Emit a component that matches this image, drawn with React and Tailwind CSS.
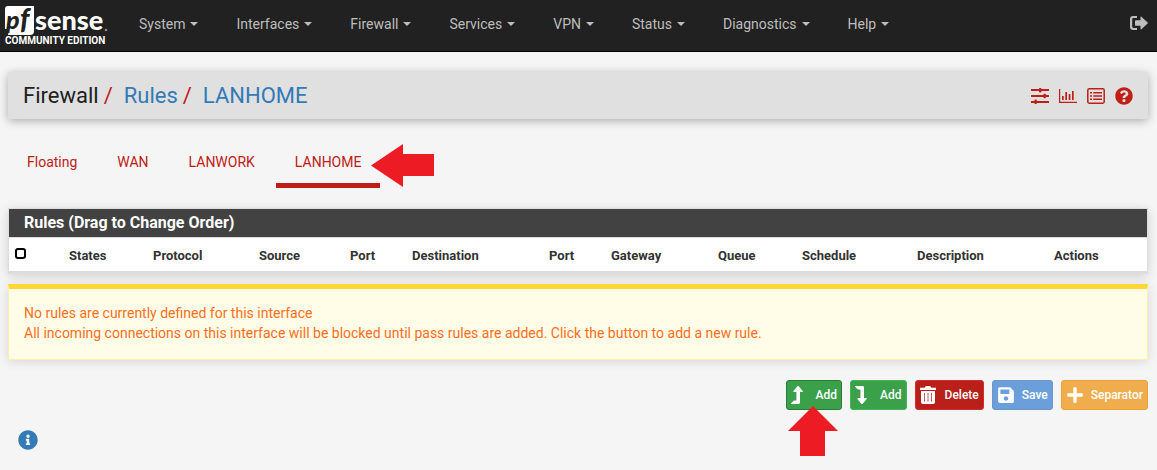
import React from "react";
import { FaQuestionCircle, FaInfoCircle, FaSave, FaPlus } from "react-icons/fa";

const menus = ["System", "Interfaces", "Firewall", "Services", "VPN", "Status", "Diagnostics", "Help"];
const tabs = ["Floating", "WAN", "LANWORK"];

const columns = [
  ["States", "w-[84px]"],
  ["Protocol", "w-[106px]"],
  ["Source", "w-[91px]"],
  ["Port", "w-[62px]"],
  ["Destination", "w-[137px]"],
  ["Port", "w-[62px]"],
  ["Gateway", "w-[107px]"],
  ["Queue", "w-[84px]"],
  ["Schedule", "w-[115px]"],
  ["Description", "w-[137px]"],
  ["Actions", "w-[101px]"],
];

function Logo() {
  return (
    <a href="#" aria-label="pfSense Community Edition" className="block w-[108px] shrink-0">
      <svg viewBox="0 0 112 51" className="block h-[51px] w-[112px]">
        <path d="M8 6H34V31Q34 35 30 35H8L9 29H5V9Q5 6 8 6Z" fill="#fff" />
        <text x="6" y="29" fontFamily="Lato, sans-serif" fontWeight="900" fontStyle="italic" fontSize="25" fill="#212121">p</text>
        <text x="20" y="29" fontFamily="Lato, sans-serif" fontWeight="900" fontStyle="italic" fontSize="28" fill="#212121">f</text>
        <text x="35" y="30" fontFamily="Lato, sans-serif" fontWeight="900" fontSize="27" fill="#fff">sense</text>
        <circle cx="106" cy="30" r="1.3" fill="#8a8a8a" />
        <text x="5" y="44" fontFamily="Roboto, sans-serif" fontWeight="700" fontSize="10" fill="#fff">COMMUNITY EDITION</text>
      </svg>
    </a>
  );
}

function SignOutIcon() {
  return (
    <svg viewBox="0 0 18 14" className="h-[14px] w-[18px]" fill="#bdbdbd">
      <path d="M7 0H3Q0 0 0 3V11Q0 14 3 14H7V12H3.6Q2.2 12 2.2 10.6V3.4Q2.2 2 3.6 2H7Z" />
      <path d="M6 4.2H10.5V1.2Q10.5 .2 11.4 .8L17.6 6.4Q18.2 7 17.6 7.6L11.4 13.2Q10.5 13.8 10.5 12.8V9.8H6Q5 9.8 5 9.2V4.8Q5 4.2 6 4.2Z" />
    </svg>
  );
}

function SlidersIcon() {
  return (
    <svg viewBox="0 0 18 16" className="h-4 w-[18px]" fill="#bf2016">
      <path d="M0 1H18V3H0ZM0 7H18V9H0ZM0 13H18V15H0Z" />
      <rect x="8" y="0" width="2.4" height="4.5" rx="0.8" />
      <rect x="12.5" y="5.8" width="2.4" height="4.4" rx="0.8" />
      <rect x="3.5" y="11.6" width="2.4" height="4.4" rx="0.8" />
    </svg>
  );
}

function ChartIcon() {
  return (
    <svg viewBox="0 0 18 16" className="h-4 w-[18px]" fill="#bf2016">
      <path d="M0 1H1.2V13.8H18V15H0ZM3 8H4.7V12H3ZM6.3 4H8V12H6.3ZM9.7 6H11.4V12H9.7ZM13 3H14.7V12H13Z" />
    </svg>
  );
}

function ListIcon() {
  return (
    <svg viewBox="0 0 18 16" className="h-4 w-[18px]" fill="#bf2016">
      <rect x="0.8" y="0.8" width="16.4" height="14.4" rx="1.4" fill="none" stroke="#bf2016" strokeWidth="1.5" />
      <path d="M3 4H5V5.6H3ZM3 7.2H5V8.8H3ZM3 10.4H5V12H3ZM6.2 4H15V5.4H6.2ZM6.2 7.3H15V8.7H6.2ZM6.2 10.6H15V12H6.2Z" />
    </svg>
  );
}

function LevelIcon({ down }) {
  return (
    <svg viewBox="0 0 12 18" className="h-[18px] w-3" fill="#fff">
      {down ? (
        <path d="M0 0H7.6Q9 0 9 1.4V12H11.4Q12.4 12.2 11.7 13.1L7.7 17.7Q7 18.3 6.3 17.7L2.5 13.1Q2 12.2 3 12H5.4V3.4H3Q2.6 3.4 2.4 3.1L0 .7Z" />
      ) : (
        <path d="M0 18H7.6Q9 18 9 16.6V6H11.4Q12.4 5.8 11.7 4.9L7.7 .3Q7 -.3 6.3 .3L2.5 4.9Q2 5.8 3 6H5.4V14.6H3Q2.6 14.6 2.4 14.9L0 17.3Z" />
      )}
    </svg>
  );
}

function TrashIcon() {
  return (
    <svg viewBox="0 0 16 18" className="h-[18px] w-4">
      <path d="M0 1.8H4.6L5.4 .5Q5.8 0 6.4 0H9.6Q10.2 0 10.6 .5L11.4 1.8H16V4H0Z" fill="#fff" />
      <path d="M1 5H15V16Q15 18 13 18H3Q1 18 1 16Z" fill="#fff" />
      <path d="M4.5 7V15.6M8 7V15.6M11.5 7V15.6" stroke="#cf5a68" strokeWidth="1" />
    </svg>
  );
}

function ActionButton({ icon, className, children }) {
  return (
    <button type="button" className={"flex h-[30px] items-center rounded-[3px] border px-1 text-xs font-medium text-white " + className}>
      <span className="flex w-[25px] items-center justify-start">{icon}</span>
      <span>{children}</span>
    </button>
  );
}

export default function App() {
  return (
    <div className="min-h-screen bg-[#f5f5f5] pb-5 font-['Roboto',sans-serif] text-sm text-[#212121]">
      <nav className="flex h-[52px] items-center border-b border-black bg-[#212121] pr-[9px]">
        <Logo />
        <ul className="flex pb-1 pl-4">
          {menus.map((m) => (
            <li key={m}>
              <button type="button" className="flex h-11 items-center gap-[5px] pr-[23px] pl-[15px] text-sm text-[#bdbdbd]">
                {m}
                <span className="border-x-4 border-t-4 border-x-transparent border-t-[#bdbdbd]" />
              </button>
            </li>
          ))}
        </ul>
        <a href="#" aria-label="Log out" className="ml-auto pb-[6px]">
          <SignOutIcon />
        </a>
      </nav>

      <main className="pt-5 pr-[9px] pl-2">
        <header className="flex h-[47px] items-center justify-between rounded-[2px] bg-[#e0e0e0] px-[15px] shadow-[0_2px_10px_rgba(0,0,0,0.3)]">
          <h1 className="flex text-[22px] leading-6">
            <span>Firewall</span>
            <span className="pr-[11px] pl-[5px] text-[#bf2016]">/</span>
            <a href="#" className="text-[#337ab7]">Rules</a>
            <span className="pr-[11px] pl-[5px] text-[#bf2016]">/</span>
            <a href="#" className="text-[#337ab7]">LANHOME</a>
          </h1>
          <div className="flex items-center gap-[10px]">
            <a href="#" aria-label="Settings"><SlidersIcon /></a>
            <a href="#" aria-label="Status"><ChartIcon /></a>
            <a href="#" aria-label="Logs"><ListIcon /></a>
            <a href="#" aria-label="Help"><FaQuestionCircle className="size-[18px] text-[#bf2016]" /></a>
          </div>
        </header>

        <ul className="flex gap-[2px] pt-[17px] text-[#bf2016]">
          {tabs.map((t) => (
            <li key={t}>
              <a href="#" className="block border-b-[5px] border-transparent px-[19px] pt-4 pb-[11px] leading-5">{t}</a>
            </li>
          ))}
          <li className="relative">
            <a href="#" className="block border-b-[5px] border-[#bf2016] px-[19px] pt-4 pb-[11px] leading-5">LANHOME</a>
            <svg viewBox="0 0 63 43" className="absolute top-2 left-full -ml-[9px] h-[43px] w-[63px]" fill="#ed1c24">
              <path d="M0 21.5L32 0V10H63V32H32V43Z" />
            </svg>
          </li>
        </ul>

        <section className="mt-5 border border-b-[3px] border-[#ddd] bg-white shadow-[0_2px_10px_rgba(0,0,0,0.15)]">
          <h2 className="border-b border-[#ddd] bg-[#424242] px-[15px] py-[2px] text-base leading-6 font-bold text-white">
            Rules (Drag to Change Order)
          </h2>
          <table className="w-full table-fixed text-left text-[13px] leading-5">
            <thead>
              <tr>
                <th className="w-[52px] px-[6px] pb-[3px]">
                  <input type="checkbox" aria-label="Select all rules" className="block size-[11px] appearance-none rounded-[3px] border-2 border-black bg-white" />
                </th>
                {columns.map(([name, width], i) => (
                  <th key={i} className={"px-2 pt-2 pb-[5px] font-bold whitespace-nowrap text-[#333] " + width}>{name}</th>
                ))}
              </tr>
            </thead>
          </table>
        </section>

        <div role="alert" className="mt-[10px] border border-t-[5px] border-[#fff0a8] border-t-[#fdd835] bg-[#fffde7] px-[15px] pt-[14px] pb-4 leading-5 text-[#ff6f20] shadow-[0_2px_10px_rgba(0,0,0,0.12)]">
          <p>No rules are currently defined for this interface</p>
          <p>All incoming connections on this interface will be blocked until pass rules are added. Click the button to add a new rule.</p>
        </div>

        <div className="mt-5 flex justify-end gap-2">
          <div className="relative">
            <ActionButton icon={<LevelIcon />} className="border-[#2b7d36] bg-[#3aa04a]">Add</ActionButton>
            <svg viewBox="0 0 50 50" className="absolute top-[26px] left-[2px] size-[50px]" fill="#ed1c24">
              <path d="M25 0L50 25H37V50H12V25H0Z" />
            </svg>
          </div>
          <ActionButton icon={<LevelIcon down />} className="border-[#43b657] bg-[#3aa04a]">Add</ActionButton>
          <ActionButton icon={<TrashIcon />} className="border-[#d32f2f] bg-[#b9201a]">Delete</ActionButton>
          <ActionButton icon={<FaSave className="size-[18px]" />} className="border-[#6b97c4] bg-[#6a9fdb]">Save</ActionButton>
          <ActionButton icon={<FaPlus className="size-[18px]" />} className="border-[#eea236] bg-[#f0ad4e]">Separator</ActionButton>
        </div>

        <button type="button" aria-label="Show information" className="mt-5 ml-[10px] block">
          <FaInfoCircle className="size-5 text-[#337ab7]" />
        </button>
      </main>
    </div>
  );
}
